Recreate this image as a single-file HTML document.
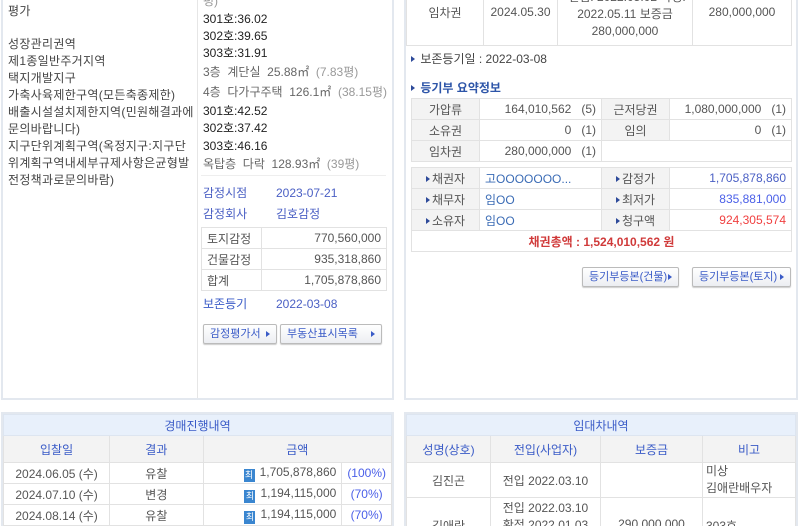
<!DOCTYPE html>
<html style="overflow:hidden;width:800px;height:526px"><head><meta charset="utf-8"><style>
*{margin:0;padding:0;box-sizing:border-box}
body{width:800px;height:526px;overflow:hidden;background:#fff;font-family:"Liberation Sans","Noto Sans CJK KR","NanumGothic",sans-serif;font-size:12px;color:#444;position:relative}
.a{position:absolute;white-space:nowrap;line-height:14px}
.box{position:absolute;border:2px solid #e3e8ef}
.ln{position:absolute;background:#e3e3e3}
.blue{color:#4a5fc4}
.lb{color:#3a5bc7}
.gr{color:#999}
table{border-collapse:collapse;position:absolute;font-size:12px}
td{border:1px solid #e2e2e2;height:21px;padding:0 5px;color:#555}
.th{background:#f3f3f3;text-align:center}
.r{text-align:right}
.c{text-align:center}
.btn{position:absolute;height:20px;border:1px solid #bbb;border-radius:2px;background:linear-gradient(#fff,#eceef2);color:#3a5bc7;font-size:11px;line-height:18px;padding-left:6px;box-shadow:0 1px 1px #ccc}
.btn:after{content:"";position:absolute;right:6px;top:6px;border-left:4px solid #3a5bc7;border-top:3px solid transparent;border-bottom:3px solid transparent}
.tri{display:inline-block;border-left:4px solid #2d4a9a;border-top:3px solid transparent;border-bottom:3px solid transparent;margin-right:2px;vertical-align:1px}
.choi{display:inline-block;width:11px;height:13px;background:#3a86d0;color:#fff;font-size:9px;line-height:13px;text-align:center;margin-right:5px;vertical-align:-2px}
.ls{letter-spacing:.3px}
#clip{position:absolute;left:0;top:0;width:800px;height:526px;overflow:hidden}
.vt{vertical-align:top;padding-top:19px}
</style></head><body><div id="clip">

<div class="box" style="left:1px;top:-2px;width:393px;height:402px"></div>
<div class="ln" style="left:197px;top:0;width:1px;height:398px;background:#e6e6e6"></div>
<div class="a ls" style="left:8px;top:4px">평가</div>
<div class="a ls" style="left:8px;top:37px">성장관리권역</div>
<div class="a ls" style="left:8px;top:54px">제1종일반주거지역</div>
<div class="a ls" style="left:8px;top:71px">택지개발지구</div>
<div class="a ls" style="left:8px;top:88px">가축사육제한구역(모든축종제한)</div>
<div class="a ls" style="left:8px;top:105px">배출시설설치제한지역(민원해결과에</div>
<div class="a ls" style="left:8px;top:122px">문의바랍니다)</div>
<div class="a ls" style="left:8px;top:139px">지구단위계획구역(옥정지구:지구단</div>
<div class="a ls" style="left:8px;top:156px">위계획구역내세부규제사항은균형발</div>
<div class="a ls" style="left:8px;top:173px">전정책과로문의바람)</div>

<div class="a gr" style="left:203px;top:-6px">평)</div>
<div class="a" style="left:203px;top:12px;color:#222">301호:36.02</div>
<div class="a" style="left:203px;top:29px;color:#222">302호:39.65</div>
<div class="a" style="left:203px;top:46px;color:#222">303호:31.91</div>
<div class="a" style="left:203px;top:65px;color:#666">3층 &nbsp;계단실 &nbsp;25.88㎡ <span class="gr">&nbsp;(7.83평)</span></div>
<div class="a" style="left:203px;top:85px;color:#666">4층 &nbsp;다가구주택 &nbsp;126.1㎡ <span class="gr">&nbsp;(38.15평)</span></div>
<div class="a" style="left:203px;top:104px;color:#222">301호:42.52</div>
<div class="a" style="left:203px;top:121px;color:#222">302호:37.42</div>
<div class="a" style="left:203px;top:139px;color:#222">303호:46.16</div>
<div class="a" style="left:203px;top:157px;color:#666">옥탑층 &nbsp;다락 &nbsp;128.93㎡ <span class="gr">&nbsp;(39평)</span></div>
<div class="ln" style="left:201px;top:175px;width:185px;height:1px;background:#eee"></div>
<div class="a blue" style="left:203px;top:186px">감정시점</div>
<div class="a blue" style="left:276px;top:186px">2023-07-21</div>
<div class="a blue" style="left:203px;top:207px">감정회사</div>
<div class="a blue" style="left:276px;top:207px">김호감정</div>
<table style="left:201px;top:227px;width:186px">
<tr><td style="width:60px">토지감정</td><td class="r">770,560,000</td></tr>
<tr><td>건물감정</td><td class="r">935,318,860</td></tr>
<tr><td>합계</td><td class="r">1,705,878,860</td></tr>
</table>
<div class="a lb" style="left:203px;top:297px">보존등기</div>
<div class="a blue" style="left:276px;top:297px">2022-03-08</div>
<div class="btn" style="left:203px;top:324px;width:74px">감정평가서</div>
<div class="btn" style="left:280px;top:324px;width:102px">부동산표시목록</div>

<div class="box" style="left:404px;top:-2px;width:394px;height:402px"></div>
<table style="left:406px;top:-22px;width:386px">
<tr><td class="c" style="width:77px;height:67px">임차권</td><td class="c" style="width:74px">2024.05.30</td><td class="c" style="width:135px;line-height:17px;padding-top:4px">-전입: 2022.05.02 확정:<br>2022.05.11 보증금<br>280,000,000</td><td class="c">280,000,000</td></tr>
</table>
<div class="a" style="left:411px;top:52px"><span class="tri"></span> 보존등기일 : 2022-03-08</div>
<div class="a" style="left:411px;top:81px;color:#2d55a8;font-weight:bold"><span class="tri"></span> 등기부 요약정보</div>
<table style="left:411px;top:98px;width:381px">
<tr><td class="th" style="width:68px">가압류</td><td class="r" style="width:122px">164,010,562 &nbsp;&nbsp;(5)</td><td class="th" style="width:68px">근저당권</td><td class="r">1,080,000,000 &nbsp;&nbsp;(1)</td></tr>
<tr><td class="th">소유권</td><td class="r">0 &nbsp;&nbsp;(1)</td><td class="th">임의</td><td class="r">0 &nbsp;&nbsp;(1)</td></tr>
<tr><td class="th">임차권</td><td class="r">280,000,000 &nbsp;&nbsp;(1)</td><td colspan="2"></td></tr>
</table>
<table style="left:411px;top:167px;width:381px">
<tr><td class="th" style="width:68px"><span class="tri"></span>채권자</td><td style="width:122px;color:#3a6bb5">고OOOOOOO...</td><td class="th" style="width:68px"><span class="tri"></span>감정가</td><td class="r" style="color:#4a5fc4">1,705,878,860</td></tr>
<tr><td class="th"><span class="tri"></span>채무자</td><td style="color:#3a6bb5">임OO</td><td class="th"><span class="tri"></span>최저가</td><td class="r" style="color:#4a5fe8">835,881,000</td></tr>
<tr><td class="th"><span class="tri"></span>소유자</td><td style="color:#3a6bb5">임OO</td><td class="th"><span class="tri"></span>청구액</td><td class="r" style="color:#f04040">924,305,574</td></tr>
<tr><td colspan="4" class="c" style="color:#d03a3a;font-weight:bold">채권총액 : 1,524,010,562 원</td></tr>
</table>
<div class="btn" style="left:582px;top:267px;width:97px">등기부등본(건물)</div>
<div class="btn" style="left:692px;top:267px;width:99px">등기부등본(토지)</div>

<div class="box" style="left:1px;top:412px;width:393px;height:120px"></div>
<table style="left:3px;top:414px;width:389px">
<tr><td colspan="4" class="c" style="background:#e8f0fb;color:#3a5bc7;height:21px;border-color:#dde5f0">경매진행내역</td></tr>
<tr><td class="th" style="width:107px;height:27px;color:#3a5bc7">입찰일</td><td class="th" style="width:95px;color:#3a5bc7">결과</td><td class="th" colspan="2" style="color:#3a5bc7">금액</td></tr>
<tr><td class="c">2024.06.05 (수)</td><td class="c">유찰</td><td class="r" style="width:140px"><span class="choi">최</span>1,705,878,860</td><td class="c" style="color:#4a5fe8">(100%)</td></tr>
<tr><td class="c">2024.07.10 (수)</td><td class="c">변경</td><td class="r"><span class="choi">최</span>1,194,115,000</td><td class="c" style="color:#4a5fe8">(70%)</td></tr>
<tr><td class="c">2024.08.14 (수)</td><td class="c">유찰</td><td class="r"><span class="choi">최</span>1,194,115,000</td><td class="c" style="color:#4a5fe8">(70%)</td></tr>
</table>

<div class="box" style="left:404px;top:412px;width:394px;height:120px"></div>
<table style="left:406px;top:414px;width:390px">
<tr><td colspan="4" class="c" style="background:#e8f0fb;color:#3a5bc7;height:21px;border-color:#dde5f0">임대차내역</td></tr>
<tr><td class="th" style="width:84px;height:27px;color:#3a5bc7">성명(상호)</td><td class="th" style="width:110px;color:#3a5bc7">전입(사업자)</td><td class="th" style="width:102px;color:#3a5bc7">보증금</td><td class="th" style="color:#3a5bc7">비고</td></tr>
<tr><td class="c" style="height:34px">김진곤</td><td class="c">전입 2022.03.10</td><td></td><td style="line-height:17px;padding:0 3px">미상<br>김애란배우자</td></tr>
<tr><td class="c vt" style="height:52px">김애란</td><td class="c" style="vertical-align:top;line-height:17px;padding-top:2px">전입 2022.03.10<br>확정 2022.01.03</td><td class="c vt">290,000,000</td><td class="vt" style="padding-left:3px">303호</td></tr>
</table>
</div></body></html>
